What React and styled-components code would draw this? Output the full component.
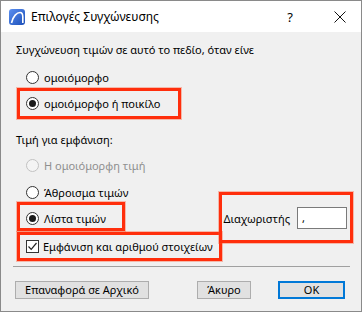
import React from "react";
import styled, { createGlobalStyle } from "styled-components";

const Global = createGlobalStyle`
  html, body { margin: 0; padding: 0; background: #ffffff; }
  body { font-family: "Noto Sans", "Segoe UI", sans-serif; }
`;

const Window = styled.div`
  position: relative;
  box-sizing: border-box;
  width: 362px;
  height: 312px;
  border: 1px solid #8a8a8a;
  background: #f0f0f0;
  display: flex;
  flex-direction: column;
  font-size: 11px;
  color: #000;
`;

const TitleBar = styled.div`
  height: 31px;
  background: #ffffff;
  display: flex;
  align-items: center;
  padding-left: 8px;
  padding-right: 14px;
  gap: 6px;
`;

const TitleText = styled.div`
  flex: 1;
  font-size: 12px;
  line-height: 16px;
`;

const TitleButton = styled.div`
  width: ${(p) => p.$w}px;
  margin-left: ${(p) => p.$ml || 0}px;
  display: flex;
  justify-content: center;
  align-items: center;
  font-size: 13px;
  line-height: 16px;
`;

const Body = styled.div`
  flex: 1;
  display: flex;
  flex-direction: column;
  padding: 10px 11px 0 12px;
`;

const Heading = styled.div`
  padding-left: 3px;
  line-height: 16px;
  margin-top: ${(p) => p.$mt || 0}px;
  white-space: nowrap;
  overflow: hidden;
`;

const Group = styled.div`
  display: flex;
  flex-direction: column;
  margin-top: ${(p) => p.$mt || 0}px;
`;

const Row = styled.div`
  height: 26px;
  display: flex;
  align-items: center;
  padding-left: 13px;
  margin-top: ${(p) => p.$mt || 0}px;
  color: ${(p) => (p.$disabled ? "#8f8f8f" : "#000")};
`;

const Radio = styled.span`
  box-sizing: border-box;
  width: 13px;
  height: 13px;
  border-radius: 50%;
  border: 1px solid ${(p) => (p.$disabled ? "#c2c2c2" : "#333")};
  background: ${(p) => (p.$disabled ? "#f4f4f4" : "#fff")};
  display: flex;
  align-items: center;
  justify-content: center;
  margin-right: 5px;
  flex: none;
  &::after {
    content: "";
    display: ${(p) => (p.$checked ? "block" : "none")};
    width: 7px;
    height: 7px;
    border-radius: 50%;
    background: #1a1a1a;
  }
`;

const Check = styled.span`
  box-sizing: border-box;
  width: 13px;
  height: 13px;
  border: 1px solid #333;
  background: #fff;
  margin-right: 4px;
  flex: none;
  display: flex;
  align-items: center;
  justify-content: center;
`;

const Spacer = styled.div`
  flex: 1;
`;

const SepLabel = styled.span`
  margin-right: 7px;
`;

const Input = styled.div`
  box-sizing: border-box;
  width: 50px;
  height: 22px;
  border: 1px solid #7a7a7a;
  background: #fff;
  padding-left: 4px;
  line-height: 20px;
  margin-right: 3px;
`;

const Separator = styled.div`
  height: 1px;
  background: #a0a0a0;
  margin-top: 7px;
`;

const ButtonBar = styled.div`
  display: flex;
  align-items: center;
  margin-top: 14px;
  padding-left: 2px;
`;

const Button = styled.div`
  box-sizing: border-box;
  width: ${(p) => p.$w}px;
  height: 18px;
  margin-left: ${(p) => p.$ml || 0}px;
  background: #e1e1e1;
  border: ${(p) => (p.$primary ? "2px solid #0078d7" : "1px solid #adadad")};
  display: flex;
  align-items: center;
  justify-content: center;
  line-height: 14px;
`;

const Mark = styled.div`
  position: absolute;
  box-sizing: border-box;
  left: ${(p) => p.$x}px;
  top: ${(p) => p.$y}px;
  width: ${(p) => p.$w}px;
  height: ${(p) => p.$h}px;
  border: 3px solid #ff2e0c;
  box-shadow: 0 0 0 1px rgba(255, 80, 40, 0.35);
  pointer-events: none;
`;

const Logo = () => (
  <svg width="16" height="16" viewBox="0 0 16 16">
    <defs>
      <linearGradient id="lg" x1="0" y1="0" x2="1" y2="1">
        <stop offset="0" stopColor="#5b8ff0" />
        <stop offset="1" stopColor="#1c4fb8" />
      </linearGradient>
    </defs>
    <rect x="0" y="0" width="16" height="16" rx="3" fill="url(#lg)" />
    <path d="M2.5 14 C4 7 8 3.5 11 3.5 C13 3.5 13.8 5.5 13.8 8 L13.8 14" fill="none" stroke="#fff" strokeWidth="1.6" />
  </svg>
);

const CloseIcon = () => (
  <svg width="12" height="12" viewBox="0 0 12 12">
    <path d="M0.5 0.5 L11.5 11.5 M11.5 0.5 L0.5 11.5" stroke="#111" strokeWidth="1" />
  </svg>
);

const CheckMark = () => (
  <svg width="11" height="11" viewBox="0 0 11 11">
    <path d="M1.5 5.5 L4.2 8.3 L9.5 2" fill="none" stroke="#222" strokeWidth="1.2" />
  </svg>
);

export default function App() {
  return (
    <>
      <Global />
      <Window>
        <TitleBar>
          <Logo />
          <TitleText>Επιλογές Συγχώνευσης</TitleText>
          <TitleButton $w={14}>?</TitleButton>
          <TitleButton $w={14} $ml={30}>
            <CloseIcon />
          </TitleButton>
        </TitleBar>
        <Body>
          <Heading>Συγχώνευση τιμών σε αυτό το πεδίο, όταν είνε</Heading>
          <Group $mt={6}>
            <Row>
              <Radio />
              ομοιόμορφο
            </Row>
            <Row>
              <Radio $checked />
              ομοιόμορφο ή ποικίλο
            </Row>
          </Group>
          <Heading $mt={16}>Τιμή για εμφάνιση:</Heading>
          <Group $mt={4}>
            <Row $disabled>
              <Radio $disabled />Η ομοιόμορφη τιμή
            </Row>
            <Row $mt={1}>
              <Radio />
              Άθροισμα τιμών
            </Row>
            <Row>
              <Radio $checked />
              Λίστα τιμών
              <Spacer />
              <SepLabel>Διαχωριστής</SepLabel>
              <Input>,</Input>
            </Row>
            <Row $mt={2}>
              <Check>
                <CheckMark />
              </Check>
              Εμφάνιση και αριθμού στοιχείων
            </Row>
          </Group>
          <Separator />
          <ButtonBar>
            <Button $w={134}>Επαναφορά σε Αρχικό</Button>
            <Button $w={54} $ml={48}>Άκυρο</Button>
            <Button $w={67} $ml={27} $primary>OK</Button>
          </ButtonBar>
        </Body>
        <Mark $x={16} $y={87} $w={164} $h={31} />
        <Mark $x={16} $y={201} $w={108} $h={29} />
        <Mark $x={16} $y={231} $w={205} $h={29} />
        <Mark $x={218} $y={191} $w={134} $h={51} />
      </Window>
    </>
  );
}
